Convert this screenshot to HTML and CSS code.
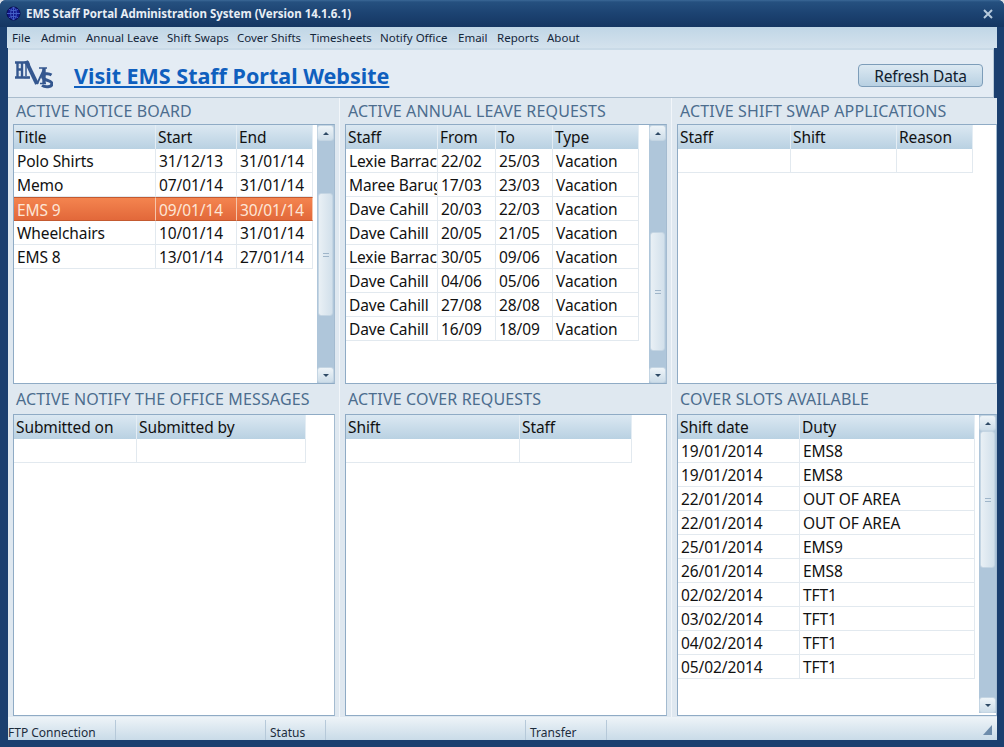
FILE: index.html
```html
<!DOCTYPE html>
<html lang="en">
<head>
<meta charset="utf-8">
<title>EMS Staff Portal Administration System</title>
<link rel="stylesheet" href="styles.css">
</head>
<body>
<div class="window">
  <header class="titlebar">
    <svg class="appicon" viewBox="0 0 16 16" aria-hidden="true">
      <circle cx="8" cy="8" r="7" fill="#10168a" stroke="#0a0f50"/>
      <path d="M1 8h14M8 1v14M3 3.5c3 2 7 2 10 0M3 12.5c3-2 7-2 10 0M8 1c-4 3-4 11 0 14M8 1c4 3 4 11 0 14" fill="none" stroke="#4562c8" stroke-width="1"/>
    </svg>
    <span class="titletext">EMS Staff Portal Administration System (Version 14.1.6.1)</span>
    <svg class="closeicon" viewBox="0 0 10 10" aria-hidden="true"><path d="M1 1l8 8M9 1l-8 8" stroke="#b7cadc" stroke-width="2" fill="none"/></svg>
  </header>
  <nav class="menubar">
    <span class="m1">File</span><span class="m2">Admin</span><span class="m3">Annual Leave</span><span class="m4">Shift Swaps</span><span class="m5">Cover Shifts</span><span class="m6">Timesheets</span><span class="m7">Notify Office</span><span class="m8">Email</span><span class="m9">Reports</span><span>About</span>
  </nav>
  <div class="linkbar">
    <svg class="logo" viewBox="0 0 38 29" role="img" aria-label="EMS logo">
      <g fill="none" stroke="#34578f">
        <path d="M0 2.500h13l1 3M0 17.500h15M2.500 2v16M7 2v16" stroke-width="2.400"/>
        <path d="M3 9.500h5" stroke-width="2.500"/>
        <path d="M4 5.500h2M4 13.500h2" stroke="#c9d6e6" stroke-width="1.500"/>
        <path d="M11 1l11 23" stroke-width="4"/>
        <path d="M11 3v13M9 17.500h5" stroke-width="1.500"/>
        <path d="M22 24l7-15" stroke-width="1.800"/>
        <path d="M29 8v15" stroke-width="3.400"/>
        <path d="M24 8h8M25 23.500h6" stroke-width="1.500"/>
        <path d="M36.500 15c-3-2-9-1.800-9 1.800 0 4 9.500 2.800 9.500 7 0 3.600-7 3.800-10 1.600" stroke-width="3"/>
      </g>
    </svg>
    <a class="sitelink" href="#">Visit EMS Staff Portal Website</a>
    <button class="refresh" type="button">Refresh Data</button>
  </div>
  <main class="panels">
    <section class="panel top">
      <h2>ACTIVE NOTICE BOARD</h2>
      <div class="list">
        <table class="t1">
          <colgroup><col class="c142"><col class="c81"><col class="c76"></colgroup>
          <thead><tr><th>Title</th><th>Start</th><th>End</th></tr></thead>
          <tbody>
            <tr><td>Polo Shirts</td><td>31/12/13</td><td>31/01/14</td></tr>
            <tr><td>Memo</td><td>07/01/14</td><td>31/01/14</td></tr>
            <tr class="selected"><td>EMS 9</td><td>09/01/14</td><td>30/01/14</td></tr>
            <tr><td>Wheelchairs</td><td>10/01/14</td><td>31/01/14</td></tr>
            <tr><td>EMS 8</td><td>13/01/14</td><td>27/01/14</td></tr>
          </tbody>
        </table>
        <div class="scrollbar sb1">
          <div class="btn up"></div><div class="track before"></div><div class="thumb"><i></i></div><div class="track after"></div><div class="btn down"></div>
        </div>
      </div>
    </section>
    <section class="panel top">
      <h2>ACTIVE ANNUAL LEAVE REQUESTS</h2>
      <div class="list">
        <table class="t2">
          <colgroup><col class="c92"><col class="c58"><col class="c57"><col class="c86"></colgroup>
          <thead><tr><th>Staff</th><th>From</th><th>To</th><th>Type</th></tr></thead>
          <tbody>
            <tr><td>Lexie Barracl</td><td>22/02</td><td>25/03</td><td>Vacation</td></tr>
            <tr><td>Maree Barug</td><td>17/03</td><td>23/03</td><td>Vacation</td></tr>
            <tr><td>Dave Cahill</td><td>20/03</td><td>22/03</td><td>Vacation</td></tr>
            <tr><td>Dave Cahill</td><td>20/05</td><td>21/05</td><td>Vacation</td></tr>
            <tr><td>Lexie Barracl</td><td>30/05</td><td>09/06</td><td>Vacation</td></tr>
            <tr><td>Dave Cahill</td><td>04/06</td><td>05/06</td><td>Vacation</td></tr>
            <tr><td>Dave Cahill</td><td>27/08</td><td>28/08</td><td>Vacation</td></tr>
            <tr><td>Dave Cahill</td><td>16/09</td><td>18/09</td><td>Vacation</td></tr>
          </tbody>
        </table>
        <div class="scrollbar sb2">
          <div class="btn up"></div><div class="track before"></div><div class="thumb"><i></i></div><div class="track after"></div><div class="btn down"></div>
        </div>
      </div>
    </section>
    <section class="panel top">
      <h2>ACTIVE SHIFT SWAP APPLICATIONS</h2>
      <div class="list">
        <table class="t3">
          <colgroup><col class="c113"><col class="c106"><col class="c76"></colgroup>
          <thead><tr><th>Staff</th><th>Shift</th><th>Reason</th></tr></thead>
          <tbody><tr><td></td><td></td><td></td></tr></tbody>
        </table>
      </div>
    </section>
    <section class="panel bottom">
      <h2>ACTIVE NOTIFY THE OFFICE MESSAGES</h2>
      <div class="list">
        <table class="t4">
          <colgroup><col class="c123"><col class="c169"></colgroup>
          <thead><tr><th>Submitted on</th><th>Submitted by</th></tr></thead>
          <tbody><tr><td></td><td></td></tr></tbody>
        </table>
      </div>
    </section>
    <section class="panel bottom">
      <h2>ACTIVE COVER REQUESTS</h2>
      <div class="list">
        <table class="t5">
          <colgroup><col class="c174"><col class="c112"></colgroup>
          <thead><tr><th>Shift</th><th>Staff</th></tr></thead>
          <tbody><tr><td></td><td></td></tr></tbody>
        </table>
      </div>
    </section>
    <section class="panel bottom">
      <h2>COVER SLOTS AVAILABLE</h2>
      <div class="list">
        <table class="t6">
          <colgroup><col class="c122"><col class="c175"></colgroup>
          <thead><tr><th>Shift date</th><th>Duty</th></tr></thead>
          <tbody>
            <tr><td>19/01/2014</td><td>EMS8</td></tr>
            <tr><td>19/01/2014</td><td>EMS8</td></tr>
            <tr><td>22/01/2014</td><td>OUT OF AREA</td></tr>
            <tr><td>22/01/2014</td><td>OUT OF AREA</td></tr>
            <tr><td>25/01/2014</td><td>EMS9</td></tr>
            <tr><td>26/01/2014</td><td>EMS8</td></tr>
            <tr><td>02/02/2014</td><td>TFT1</td></tr>
            <tr><td>03/02/2014</td><td>TFT1</td></tr>
            <tr><td>04/02/2014</td><td>TFT1</td></tr>
            <tr><td>05/02/2014</td><td>TFT1</td></tr>
          </tbody>
        </table>
        <div class="scrollbar sb6">
          <div class="btn up"></div><div class="thumb"><i></i></div><div class="track after"></div><div class="btn down"></div>
        </div>
      </div>
    </section>
  </main>
  <footer class="statusbar">
    <span class="s1">FTP Connection</span><span class="s2"></span><span class="s3">Status</span><span class="s4"></span><span class="s5">Transfer</span><span class="s6"></span>
    <svg class="grip" viewBox="0 0 9 10" aria-hidden="true"><path d="M9 0v10H0z" fill="#6d8cab"/></svg>
  </footer>
</div>
</body>
</html>
```
FILE: styles.css
```css
* { box-sizing: border-box; }
html, body { margin: 0; height: 100%; background: #d9dfe6; }
body { font-family: "Noto Sans", "Liberation Sans", Arial, sans-serif; color: #111; overflow: hidden; }

.window {
  width: 1004px;
  height: 747px;
  background: #1b3f6f;
  border-radius: 6px 6px 0 0;
  padding: 0 7px 7px 8px;
  display: flex;
  flex-direction: column;
}

.titlebar {
  height: 27px;
  margin: 0 -7px 0 -8px;
  padding: 0 10px 0 6px;
  display: flex;
  align-items: center;
  gap: 5px;
  border-radius: 6px 6px 0 0;
  background: linear-gradient(#3b6896 0, #25507f 2px, #1d4473 45%, #153662 100%);
}
.appicon { width: 15px; height: 15px; flex: none; }
.titletext { color: #e8eef5; font-size: 11.5px; font-weight: bold; flex: 1; }
.closeicon { width: 10px; height: 10px; flex: none; margin-right: 1px; }

.menubar {
  height: 21px;
  margin-left: -1px;
  padding-left: 5px;
  display: flex;
  align-items: center;
  font-size: 11.5px;
  color: #14263a;
  white-space: nowrap;
  background: linear-gradient(#c0d6e6, #d4e2ed);
}
.m1 { width: 29px; }
.m2 { width: 45px; }
.m3 { width: 81px; }
.m4 { width: 70px; }
.m5 { width: 73px; }
.m6 { width: 70px; }
.m7 { width: 78px; }
.m8 { width: 39px; }
.m9 { width: 50px; }

.linkbar {
  height: 50px;
  padding: 3px 10px 0 7px;
  display: flex;
  align-items: center;
  background: #e4ecf4;
  border-top: 2px solid #c9dae7;
  border-bottom: 1px solid #a9bccd;
  border-right: 1px solid #b7c9d8;
  margin-right: 3px;
}
.logo {
  width: 38px;
  height: 29px;
  margin: -2px 21px 0 0;
  flex: none;
}
.sitelink {
  color: #0f5fbe;
  font-size: 21.5px;
  font-weight: bold;
  flex: 1;
  white-space: nowrap;
  text-decoration: underline;
}
.refresh {
  width: 125px;
  height: 23px;
  padding: 0;
  border: 1px solid #7d9db9;
  border-radius: 4px;
  background: linear-gradient(#dce9f2, #b8d0e2);
  color: #10202e;
  font-family: inherit;
  font-size: 15.5px;
  letter-spacing: -0.1px;
}

.panels {
  flex: 1;
  min-height: 0;
  display: grid;
  grid-template-columns: 332px 332px 325px;
  grid-template-rows: 290px 329px;
  background: #dfe8f0;
}
.panel {
  min-width: 0;
  padding: 0 5px 1px;
  display: flex;
  flex-direction: column;
  box-shadow: inset -2px 0 0 -1px #f2f6fa;
}
.panel.top { padding-bottom: 4px; }
.panel:nth-child(3n) { padding-right: 0; box-shadow: none; }
.panel h2 {
  height: 26px;
  margin: 0;
  padding: 2px 0 0 3px;
  flex: none;
  font-size: 16px;
  font-weight: normal;
  letter-spacing: 0.15px;
  line-height: 22px;
  white-space: nowrap;
  color: #4c6d8e;
}
.panel.bottom h2 { padding-top: 0; }

.list {
  flex: 1;
  min-height: 0;
  display: flex;
  align-items: stretch;
  justify-content: space-between;
  background: #fff;
  border: 1px solid #8fabc5;
  border-right-color: #a4bbd0;
}
table {
  border-collapse: separate;
  border-spacing: 0;
  table-layout: fixed;
  font-size: 15.5px;
  line-height: 18px;
  letter-spacing: -0.1px;
  align-self: flex-start;
  flex: none;
}
.t1 { width: 299px; }
.t2 { width: 293px; }
.t3 { width: 295px; }
.t4 { width: 292px; }
.t5 { width: 286px; }
.t6 { width: 297px; }
.c142 { width: 142px; } .c81 { width: 81px; } .c76 { width: 76px; }
.c92 { width: 92px; } .c58 { width: 58px; } .c57 { width: 57px; } .c86 { width: 86px; }
.c113 { width: 113px; } .c106 { width: 106px; }
.c123 { width: 123px; } .c169 { width: 169px; }
.c174 { width: 174px; } .c112 { width: 112px; }
.c122 { width: 122px; } .c175 { width: 175px; }

th {
  height: 24px;
  padding: 0 2px;
  font-weight: normal;
  text-align: left;
  white-space: nowrap;
  overflow: hidden;
  background: linear-gradient(#dbe8f2, #b9d1e2);
  border-right: 1px solid #e4edf4;
}
td {
  height: 24px;
  padding: 1px 0 0 3px;
  white-space: nowrap;
  overflow: hidden;
  border-right: 1px solid #e2e9ef;
  border-bottom: 1px solid #e2e9ef;
}
tr.selected td {
  color: #fde6d6;
  background: linear-gradient(#f4844f, #e2683a);
  border-top: 1px solid #c45a30;
  border-bottom-color: #c45a30;
  border-right-color: #f5c6ac;
}

.scrollbar {
  width: 17px;
  flex: none;
  display: flex;
  flex-direction: column;
  background: #afc6da;
}
.btn {
  height: 16px;
  flex: none;
  display: flex;
  align-items: center;
  justify-content: center;
  background: linear-gradient(#eef4f8, #cddde9);
  border: 1px solid #c4d5e3;
  border-radius: 3px;
}
.btn::after {
  content: "";
  border-left: 3px solid transparent;
  border-right: 3px solid transparent;
}
.btn.up::after { border-bottom: 3px solid #2f4a66; }
.btn.down::after { border-top: 3px solid #2f4a66; }
.track.after { flex: 1; }
.thumb {
  flex: none;
  margin: 0 1px;
  display: flex;
  align-items: center;
  justify-content: center;
  background: linear-gradient(90deg, #e9f0f5, #d2e0eb);
  border: 1px solid #c4d5e3;
  border-radius: 3px;
}
.thumb i {
  width: 6px;
  height: 4px;
  border-top: 1px solid #9fb5c9;
  border-bottom: 1px solid #9fb5c9;
}
.sb1 .before { height: 52px; }
.sb1 .thumb { height: 123px; }
.sb2 .before { height: 91px; }
.sb2 .thumb { height: 119px; }
.sb6 { margin-bottom: 2px; }
.sb6 .thumb { height: 137px; }

.statusbar {
  position: relative;
  height: 23px;
  padding-top: 3px;
  display: flex;
  align-items: stretch;
  font-size: 12px;
  line-height: 16px;
  color: #1c2c3c;
  background: linear-gradient(#eef4f8, #c9dbe8);
}
.statusbar span { padding-top: 5px; border-right: 1px solid #b6c9d9; white-space: nowrap; }
.s1 { width: 108px; }
.s2 { width: 150px; }
.s3 { width: 60px; padding-left: 4px; }
.s4 { width: 200px; }
.s5 { width: 81px; padding-left: 4px; }
.statusbar .s6 { flex: 1; border-right: 0; }
.grip { position: absolute; right: 5px; bottom: 5px; width: 9px; height: 10px; }
```
